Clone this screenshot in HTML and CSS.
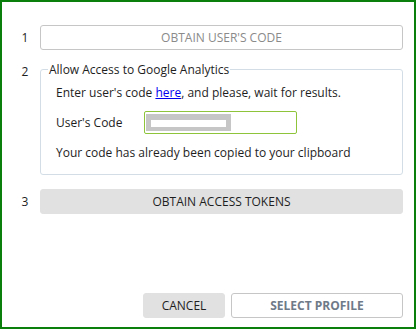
FILE: index.html
```html
<!DOCTYPE html>
<html>
<head>
<meta charset="utf-8">
<link rel="stylesheet" href="styles.css">
</head>
<body>
<div class="frame">
  <div class="step">
    <span class="num">1</span>
    <button class="btn btn-outline">OBTAIN USER'S CODE</button>
  </div>
  <div class="step step-group">
    <span class="num num-group">2</span>
    <fieldset class="group">
      <legend class="legend">Allow Access to Google Analytics</legend>
      <p class="line">Enter user's code <a class="link" href="#">here</a>, and please, wait for results.</p>
      <div class="code-row">
        <label class="code-label">User's Code</label>
        <div class="code-input"><span class="code-sel"><span class="code-mask"></span></span></div>
      </div>
      <p class="line">Your code has already been copied to your clipboard</p>
    </fieldset>
  </div>
  <div class="step step-three">
    <span class="num">3</span>
    <button class="btn btn-fill">OBTAIN ACCESS TOKENS</button>
  </div>
  <div class="footer">
    <button class="btn btn-fill btn-cancel">CANCEL</button>
    <button class="btn btn-outline btn-profile">SELECT PROFILE</button>
  </div>
</div>
</body>
</html>
```

FILE: styles.css
```css
* { box-sizing: border-box; }
html, body { margin: 0; padding: 0; background: #fff; }
body { font-family: "Open Sans", "Noto Sans", sans-serif; font-size: 12px; color: #1e1e1e; }
.frame {
  width: 416px;
  height: 329px;
  border: 2px solid #0b7f0b;
  display: flex;
  flex-direction: column;
  padding: 23px 11px 9px 14px;
}
.step { display: flex; align-items: center; gap: 6px; }
.num { width: 18px; text-align: center; font-size: 12px; color: #1e1e1e; }
.btn {
  font-family: inherit;
  font-size: 12px;
  height: 25px;
  border-radius: 3px;
  padding: 0;
  cursor: pointer;
}
.btn-outline { background: #fff; border: 1px solid #c6c6c6; color: #8a8a8a; }
.btn-fill { background: #e1e1e1; border: 1px solid #e1e1e1; color: #1e1e1e; }
.step .btn { flex: 1; }
.step-group { align-items: flex-start; margin-top: 11px; }
.num-group { margin-top: 2px; }
.group {
  flex: 1;
  margin: 0;
  border: 1px solid #d3dde6;
  border-radius: 3px;
  padding: 6px 15px 12px 15px;
  min-width: 0;
}
.legend { padding: 0 1px; margin-left: -8px; font-size: 12px; color: #1e1e1e; }
.line { margin: 0; line-height: 18px; }
.code-row { display: flex; align-items: center; margin: 9px 0 10px; }
.code-label { width: 88px; }
.code-input {
  width: 153px;
  height: 23px;
  border: 1px solid #8dc43a;
  border-radius: 2px;
  padding: 2px 1px;
}
.code-sel { display: block; width: 85px; height: 17px; background: #c6c6c6; padding: 6px 5px 4px; }
.code-mask { display: block; height: 7px; background: #fff; }
.step-three { margin-top: 14px; }
.footer { margin-top: auto; display: flex; justify-content: flex-end; gap: 6px; }
.btn-cancel { width: 82px; }
.btn-profile { width: 172px; font-weight: bold; color: #6f7a88; }
.link { color: #0000ee; }
```
